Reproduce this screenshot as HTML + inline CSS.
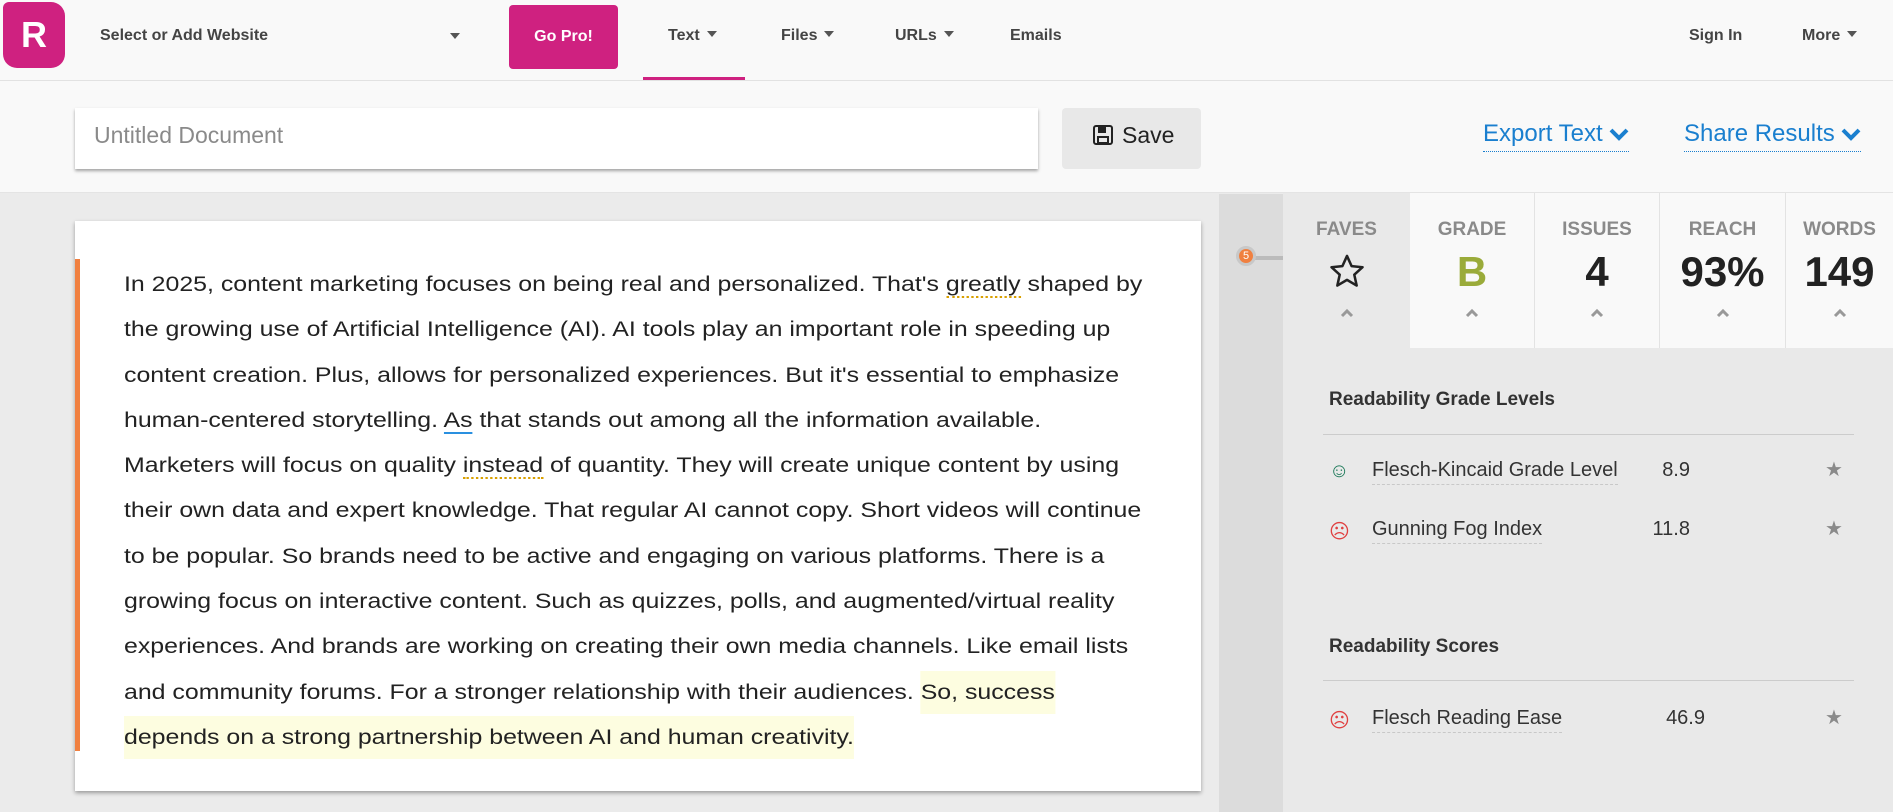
<!DOCTYPE html>
<html><head><meta charset="utf-8"><style>
*{margin:0;padding:0;box-sizing:border-box}
body{width:1893px;height:812px;overflow:hidden;background:#ebebeb;font-family:"Liberation Sans",sans-serif;position:relative;color:#222}
.a{position:absolute;white-space:nowrap}
.nav{position:absolute;left:0;top:0;width:1893px;height:81px;background:#f9f9f9;border-bottom:1px solid #e2e2e2}
.bar2{position:absolute;left:0;top:81px;width:1893px;height:112px;background:#f9f9f9;border-bottom:1px solid #e4e4e4}
.nv{font-size:16px;font-weight:bold;color:#444;top:27px}
.tri{display:inline-block;width:0;height:0;border-left:5px solid transparent;border-right:5px solid transparent;border-top:6px solid #555;margin-left:7px;vertical-align:3px}
.lk{font-size:24px;color:#1a7fcf;top:120px;border-bottom:1.5px dotted #1a7fcf;padding-bottom:3px}
.tab{position:absolute;top:193px;height:155px;background:#f9f9f9;border-right:1px solid #e3e3e3;text-align:center}
.tab .l{margin-top:26px;font-size:19px;font-weight:bold;color:#8a8a8a}
.tab .v{margin-top:6px;font-size:42px;font-weight:bold;color:#222;height:50px;line-height:50px}
.tab .c{margin-top:8px;height:14px}
.doc{position:absolute;left:124px;top:262px;font-size:21px;line-height:45.3px;color:#222}
.doc div{white-space:nowrap;transform:scaleX(1.185);transform-origin:0 0}
.hl{background:#fdfde0}
.h{font-size:19px;font-weight:bold;color:#333}
.row{font-size:20px;color:#333}
.dl{border-bottom:1px dashed #c8c8c8;padding-bottom:3px}
</style></head><body>
<div class="nav"></div>
<div class="a" style="left:3px;top:2px;width:62px;height:66px;background:#cf2180;border-radius:6px 14px 14px 14px;color:#fff;font-weight:bold;font-size:36px;text-align:center;line-height:66px">R</div>
<div class="a nv" style="left:100px">Select or Add Website</div>
<div class="a" style="left:450px;top:33px;border-left:5px solid transparent;border-right:5px solid transparent;border-top:6px solid #555"></div>
<div class="a" style="left:509px;top:5px;width:109px;height:64px;background:#cf2180;border-radius:4px;color:#fff;font-weight:bold;font-size:16px;text-align:center;line-height:64px">Go Pro!</div>
<div class="a nv" style="left:668px">Text<span class="tri"></span></div>
<div class="a" style="left:643px;top:77px;width:102px;height:3px;background:#cf2180"></div>
<div class="a nv" style="left:781px">Files<span class="tri"></span></div>
<div class="a nv" style="left:895px">URLs<span class="tri"></span></div>
<div class="a nv" style="left:1010px">Emails</div>
<div class="a nv" style="left:1689px">Sign In</div>
<div class="a nv" style="left:1802px">More<span class="tri"></span></div>

<div class="bar2"></div>
<div class="a" style="left:75px;top:108px;width:963px;height:61px;background:#fff;box-shadow:0 2px 3px rgba(0,0,0,.35);font-size:23px;color:#8a8a8a;padding:14px 0 0 19px">Untitled Document</div>
<div class="a" style="left:1062px;top:108px;width:139px;height:61px;background:#e8e8e8;border-radius:4px;font-size:23px;color:#222;padding:14px 0 0 31px"><svg width="20" height="20" viewBox="0 0 20 20" style="vertical-align:-2px;margin-right:9px"><rect x="1" y="1" width="18" height="18" rx="2" fill="none" stroke="#222" stroke-width="2"/><rect x="5" y="2" width="8" height="6" fill="#222"/><rect x="5" y="12" width="10" height="6" fill="none" stroke="#222" stroke-width="2"/></svg>Save</div>
<div class="a lk" style="left:1483px">Export Text <svg width="20" height="14" viewBox="0 0 20 14"><path d="M2 3l8 8 8-8" fill="none" stroke="#1a7fcf" stroke-width="4"/></svg></div>
<div class="a lk" style="left:1684px">Share Results <svg width="20" height="14" viewBox="0 0 20 14"><path d="M2 3l8 8 8-8" fill="none" stroke="#1a7fcf" stroke-width="4"/></svg></div>

<div class="a" style="left:1219px;top:194px;width:64px;height:618px;background:#dcdcdc"></div>
<div class="a" style="left:1283px;top:194px;width:610px;height:618px;background:#e9e9e9"></div>
<div class="a" style="left:1239px;top:256px;width:44px;height:4px;background:#bbb"></div>
<div class="a" style="left:1236px;top:246px;width:20px;height:20px;border-radius:50%;background:#f08040;border:3px solid #c8c8c8;color:#fff;font-size:11px;text-align:center;line-height:14px">5</div>

<div class="tab" style="left:1283px;width:127px;background:#e9e9e9;border:none"><div class="l">FAVES</div><div class="v"><svg width="38" height="38" viewBox="0 0 24 24" style="vertical-align:-4px"><path d="M12 2.5l2.9 6.4 6.9.7-5.2 4.7 1.5 6.9L12 17.6l-6.1 3.6 1.5-6.9L2.2 9.6l6.9-.7z" fill="none" stroke="#222" stroke-width="1.6" stroke-linejoin="round"/></svg></div><div class="c"><svg width="14" height="10" viewBox="0 0 14 10"><path d="M2 8l5-5 5 5" fill="none" stroke="#999" stroke-width="3"/></svg></div></div>
<div class="tab" style="left:1410px;width:125px"><div class="l">GRADE</div><div class="v" style="color:#9aab3a">B</div><div class="c"><svg width="14" height="10" viewBox="0 0 14 10"><path d="M2 8l5-5 5 5" fill="none" stroke="#999" stroke-width="3"/></svg></div></div>
<div class="tab" style="left:1535px;width:125px"><div class="l">ISSUES</div><div class="v">4</div><div class="c"><svg width="14" height="10" viewBox="0 0 14 10"><path d="M2 8l5-5 5 5" fill="none" stroke="#999" stroke-width="3"/></svg></div></div>
<div class="tab" style="left:1660px;width:126px"><div class="l">REACH</div><div class="v">93%</div><div class="c"><svg width="14" height="10" viewBox="0 0 14 10"><path d="M2 8l5-5 5 5" fill="none" stroke="#999" stroke-width="3"/></svg></div></div>
<div class="tab" style="left:1786px;width:107px;border:none"><div class="l">WORDS</div><div class="v">149</div><div class="c"><svg width="14" height="10" viewBox="0 0 14 10"><path d="M2 8l5-5 5 5" fill="none" stroke="#999" stroke-width="3"/></svg></div></div>

<div class="a h" style="left:1329px;top:389px">Readability Grade Levels</div>
<div class="a" style="left:1323px;top:434px;width:531px;height:1px;background:#ccc"></div>
<div class="a" style="left:1329px;top:460px;color:#1e7a5a;font-size:20px">☺</div>
<div class="a row" style="left:1372px;top:459px"><span class="dl">Flesch-Kincaid Grade Level</span></div>
<div class="a row" style="left:1640px;top:459px;width:50px;text-align:right">8.9</div>
<div class="a" style="left:1825px;top:457px;color:#8a8a8a;font-size:20px">★</div>
<div class="a" style="left:1329px;top:519px;color:#e04040;font-size:20px">☹</div>
<div class="a row" style="left:1372px;top:518px"><span class="dl">Gunning Fog Index</span></div>
<div class="a row" style="left:1640px;top:518px;width:50px;text-align:right">11.8</div>
<div class="a" style="left:1825px;top:516px;color:#8a8a8a;font-size:20px">★</div>

<div class="a h" style="left:1329px;top:636px">Readability Scores</div>
<div class="a" style="left:1323px;top:680px;width:531px;height:1px;background:#ccc"></div>
<div class="a" style="left:1329px;top:708px;color:#e04040;font-size:20px">☹</div>
<div class="a row" style="left:1372px;top:707px"><span class="dl">Flesch Reading Ease</span></div>
<div class="a row" style="left:1655px;top:707px;width:50px;text-align:right">46.9</div>
<div class="a" style="left:1825px;top:705px;color:#8a8a8a;font-size:20px">★</div>

<div class="a" style="left:75px;top:221px;width:1126px;height:570px;background:#fff;box-shadow:0 2px 4px rgba(0,0,0,.35)"></div>
<div class="a" style="left:75px;top:259px;width:5px;height:492px;background:#f08040"></div>
<div class="doc">
<div>In 2025, content marketing focuses on being real and personalized. That's <span style="border-bottom:2px dotted #d9a000">greatly</span> shaped by</div>
<div>the growing use of Artificial Intelligence (AI). AI tools play an important role in speeding up</div>
<div>content creation. Plus, allows for personalized experiences. But it's essential to emphasize</div>
<div>human-centered storytelling. <span style="border-bottom:2px solid #2a90e0">As</span> that stands out among all the information available.</div>
<div>Marketers will focus on quality <span style="border-bottom:2px dotted #d9a000">instead</span> of quantity. They will create unique content by using</div>
<div>their own data and expert knowledge. That regular AI cannot copy. Short videos will continue</div>
<div>to be popular. So brands need to be active and engaging on various platforms. There is a</div>
<div>growing focus on interactive content. Such as quizzes, polls, and augmented/virtual reality</div>
<div>experiences. And brands are working on creating their own media channels. Like email lists</div>
<div>and community forums. For a stronger relationship with their audiences. <span class="hl" style="padding:10px 0">So, success</span></div>
<div><span class="hl" style="padding:10px 0">depends on a strong partnership between AI and human creativity.</span></div>
</div>
</body></html>
